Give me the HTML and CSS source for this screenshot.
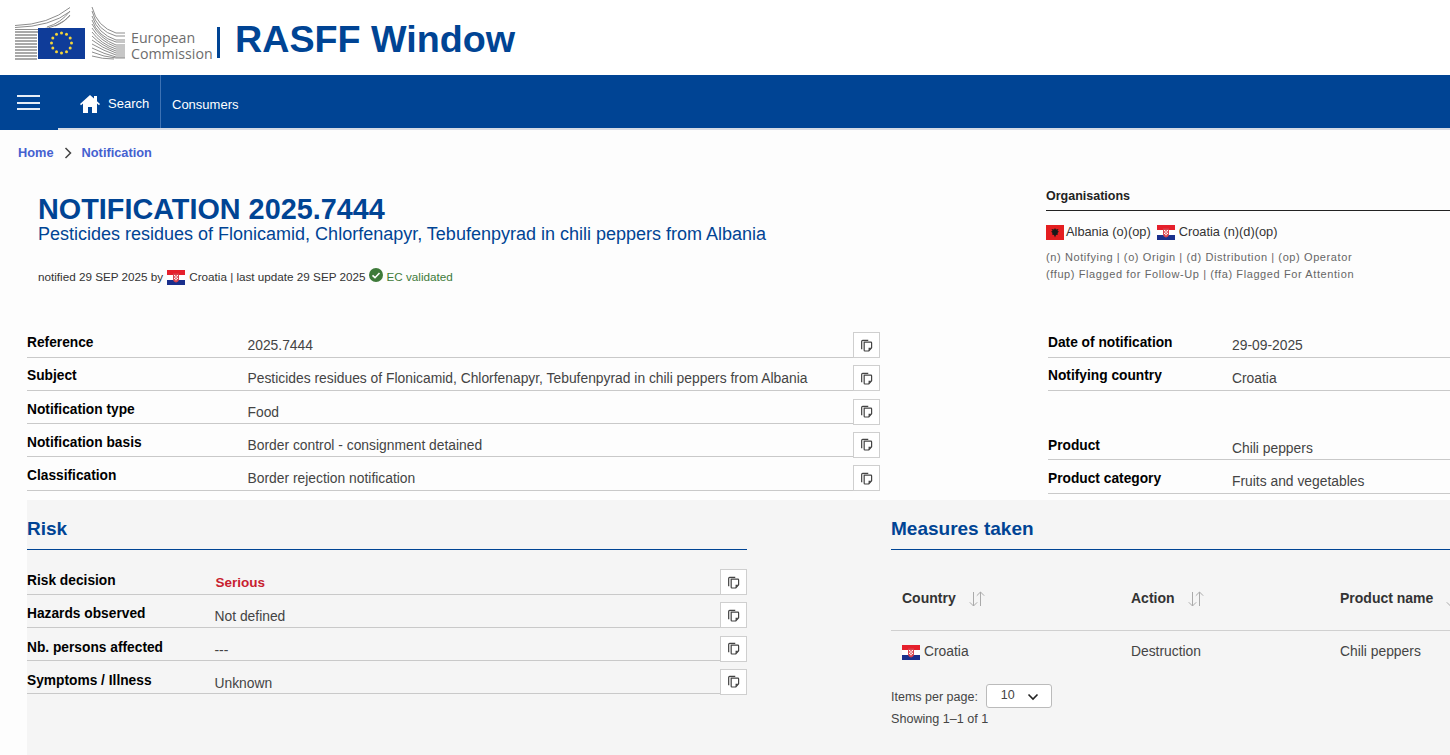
FILE: index.html
```html
<!DOCTYPE html>
<html lang="en">
<head>
<meta charset="utf-8">
<title>RASFF Window</title>
<link rel="stylesheet" href="styles.css">
</head>
<body>
<svg class="defs" width="0" height="0" aria-hidden="true">
  <defs>
    <symbol id="hr" viewBox="0 0 18 15">
      <rect width="18" height="5" fill="#e5202c"/>
      <rect y="5" width="18" height="5" fill="#fff"/>
      <rect y="10" width="18" height="5" fill="#1a2f8c"/>
      <path d="M6 3.500h6v5.500q0 2.500-3 3.500q-3-1-3-3.500z" fill="#d9434e"/>
      <path d="M7 5h1.300v1.300H7zM9.700 5H11v1.300H9.700zM8.300 6.300h1.400v1.400H8.300zM7 7.700h1.300V9H7zM9.700 7.700H11V9H9.700zM8.300 9h1.400v1.300H8.300z" fill="#fff"/>
    </symbol>
    <symbol id="al" viewBox="0 0 18 15">
      <rect width="18" height="15" fill="#e41e20"/>
      <path d="M9 3l1 1.500 2.500-.5-1 2 1.500.5-1.500 1.500.5 1.500-2 .5-1 2.500-1-2.500-2-.5.5-1.500-1.500-1.500 1.500-.5-1-2 2.500.5z" fill="#1a1a1a"/>
    </symbol>
    <symbol id="copy" viewBox="0 0 14 14">
      <path d="M2.500 10.500h-.7V2.600q0-1.100 1.100-1.100h6" fill="none" stroke="#444" stroke-width="1.300"/>
      <path d="M4.500 3.400h7.200q.8 0 .8.800v5.300l-3 3.400H5.300q-.8 0-.8-.8z" fill="none" stroke="#444" stroke-width="1.300"/>
      <path d="M12.500 9.300H9.200v3.600z" fill="#444"/>
    </symbol>
    <symbol id="sort" viewBox="0 0 16 16">
      <path d="M4.500 1v14M.8 11.300l3.700 3.700 3.700-3.700M11.500 15V1M7.800 4.700L11.500 1l3.700 3.700" fill="none" stroke="#aaa" stroke-width="1"/>
    </symbol>
  </defs>
</svg>

<header class="site-header">
  <div class="ec-logo">
    <svg class="ec-mark" width="110" height="54" viewBox="0 0 110 54" aria-hidden="true">
      <g fill="none" stroke="#8d8d8d" stroke-width="1">
        <path d="M0 19.500q34-1 55-18"/><path d="M0 21.500q36-1 55-16"/><path d="M0 23.500h24q20-2 31-14"/>
        <path d="M32 21q14-4 23-16"/><path d="M40 20q10-4 15-11"/>
        <path d="M77 1q5 20 24 26h9"/><path d="M77 5q5 20 24 25h9"/><path d="M77 10q6 18 24 24h9"/><path d="M77 14q6 17 24 22h9"/><path d="M77 18q8 15 24 21h9"/><path d="M77 22q8 13 24 19h9"/><path d="M77 26q9 12 24 17h9"/><path d="M77 30q10 10 24 15h9"/><path d="M77 34q10 8 24 13h9"/><path d="M77 38q12 7 24 11h9"/><path d="M77 42q12 6 24 9h9"/><path d="M77 46q12 5 24 6h9"/><path d="M77 50q10 3 22 3"/>
      </g>
      <g fill="none" stroke="#8d8d8d" stroke-width="1.500">
        <path d="M0 26h24"/><path d="M0 29h22"/><path d="M0 32h22"/><path d="M0 35h22"/><path d="M0 38h22"/><path d="M0 41h22"/><path d="M0 44h22"/><path d="M0 47h22"/><path d="M0 50h22"/><path d="M0 53h22"/>
      </g>
      <rect x="23" y="22" width="47" height="31" fill="#0f3c99"/>
      <g fill="#f4d43a">
        <circle cx="46.500" cy="27" r="1.500"/><circle cx="51.500" cy="28.300" r="1.500"/><circle cx="55.200" cy="32" r="1.500"/><circle cx="56.500" cy="37" r="1.500"/><circle cx="55.200" cy="42" r="1.500"/><circle cx="51.500" cy="45.700" r="1.500"/><circle cx="46.500" cy="47" r="1.500"/><circle cx="41.500" cy="45.700" r="1.500"/><circle cx="37.800" cy="42" r="1.500"/><circle cx="36.500" cy="37" r="1.500"/><circle cx="37.800" cy="32" r="1.500"/><circle cx="41.500" cy="28.300" r="1.500"/>
      </g>
    </svg>
    <div class="ec-name">European<br>Commission</div>
    <span class="ec-sep"></span>
  </div>
  <div class="app-title">RASFF Window</div>
</header>

<nav class="main-nav">
  <div class="burger"><span></span><span></span><span></span></div>
  <a class="nav-item nav-home">
    <svg width="20" height="20" viewBox="0 0 20 20" aria-hidden="true"><path d="M10 1L0 10l1 1.300L3 9.600V19h5v-6h4v6h5V9.600l2 1.700L20 10l-3-2.700V2h-3v2.600z" fill="#fff"/></svg>
    <span>Search</span>
  </a>
  <a class="nav-item nav-plain"><span>Consumers</span></a>
</nav>

<div class="breadcrumb">
  <a>Home</a>
  <svg width="8" height="12" viewBox="0 0 8 12" aria-hidden="true"><path d="M1.500 1l5 5-5 5" fill="none" stroke="#444" stroke-width="1.500"/></svg>
  <a>Notification</a>
</div>

<section class="intro">
  <div class="intro-main">
    <h1>NOTIFICATION 2025.7444</h1>
    <h2>Pesticides residues of Flonicamid, Chlorfenapyr, Tebufenpyrad in chili peppers from Albania</h2>
    <p class="meta">
      <span>notified 29 SEP 2025 by</span>
      <svg class="flag" aria-hidden="true"><use href="#hr"/></svg>
      <span>Croatia | last update 29 SEP 2025</span>
      <svg class="tick" width="14" height="14" viewBox="0 0 14 14" aria-hidden="true"><circle cx="7" cy="7" r="7" fill="#3e7a3a"/><path d="M3.500 7.300l2.500 2.400 4.500-4.700" fill="none" stroke="#fff" stroke-width="1.600"/></svg>
      <span class="validated">EC validated</span>
    </p>
  </div>
  <aside class="orgs">
    <h3>Organisations</h3>
    <div class="org-list">
      <svg class="flag flag-al" aria-hidden="true"><use href="#al"/></svg><span>Albania (o)(op)</span>
      <svg class="flag flag-second" aria-hidden="true"><use href="#hr"/></svg><span>Croatia (n)(d)(op)</span>
    </div>
    <p class="legend">(n) Notifying | (o) Origin | (d) Distribution | (op) Operator<br>(ffup) Flagged for Follow-Up | (ffa) Flagged For Attention</p>
  </aside>
</section>

<section class="facts">
  <div class="facts-left">
    <div class="row"><b>Reference</b><span>2025.7444</span><button class="copy"><svg aria-hidden="true"><use href="#copy"/></svg></button></div>
    <div class="row"><b>Subject</b><span>Pesticides residues of Flonicamid, Chlorfenapyr, Tebufenpyrad in chili peppers from Albania</span><button class="copy"><svg aria-hidden="true"><use href="#copy"/></svg></button></div>
    <div class="row"><b>Notification type</b><span>Food</span><button class="copy"><svg aria-hidden="true"><use href="#copy"/></svg></button></div>
    <div class="row"><b>Notification basis</b><span>Border control - consignment detained</span><button class="copy"><svg aria-hidden="true"><use href="#copy"/></svg></button></div>
    <div class="row"><b>Classification</b><span>Border rejection notification</span><button class="copy"><svg aria-hidden="true"><use href="#copy"/></svg></button></div>
  </div>
  <div class="facts-right">
    <div class="rrow"><b>Date of notification</b><span>29-09-2025</span></div>
    <div class="rrow"><b>Notifying country</b><span>Croatia</span></div>
    <div class="rrow rrow-gap"><b>Product</b><span>Chili peppers</span></div>
    <div class="rrow"><b>Product category</b><span>Fruits and vegetables</span></div>
  </div>
</section>

<section class="band">
  <div class="risk">
    <h4>Risk</h4>
    <div class="risk-rows">
      <div class="row"><b>Risk decision</b><span class="serious">Serious</span><button class="copy"><svg aria-hidden="true"><use href="#copy"/></svg></button></div>
      <div class="row"><b>Hazards observed</b><span>Not defined</span><button class="copy"><svg aria-hidden="true"><use href="#copy"/></svg></button></div>
      <div class="row"><b>Nb. persons affected</b><span>---</span><button class="copy"><svg aria-hidden="true"><use href="#copy"/></svg></button></div>
      <div class="row"><b>Symptoms / Illness</b><span>Unknown</span><button class="copy"><svg aria-hidden="true"><use href="#copy"/></svg></button></div>
    </div>
  </div>
  <div class="measures">
    <h4>Measures taken</h4>
    <div class="table">
      <div class="thead">
        <div class="cell c1"><b>Country</b><svg class="sort" aria-hidden="true"><use href="#sort"/></svg></div>
        <div class="cell c2"><b>Action</b><svg class="sort" aria-hidden="true"><use href="#sort"/></svg></div>
        <div class="cell c3"><b>Product name</b><svg class="sort" aria-hidden="true"><use href="#sort"/></svg></div>
      </div>
      <div class="tbody">
        <div class="cell c1"><svg class="flag" aria-hidden="true"><use href="#hr"/></svg><span>Croatia</span></div>
        <div class="cell c2">Destruction</div>
        <div class="cell c3">Chili peppers</div>
      </div>
    </div>
    <div class="pager">
      <span>Items per page:</span>
      <div class="select"><span>10</span><svg width="12" height="8" viewBox="0 0 12 8" aria-hidden="true"><path d="M1.500 1.500L6 6l4.500-4.500" fill="none" stroke="#222" stroke-width="1.600"/></svg></div>
    </div>
    <div class="showing">Showing 1–1 of 1</div>
  </div>
</section>
</body>
</html>
```

FILE: styles.css
```css
* { box-sizing: border-box; }
html, body { margin: 0; height: 755px; overflow: hidden; }
body { background: #fdfdfd; color: #333; font: 14px/1.2 "Liberation Sans", Arial, sans-serif; width: 1450px; }
.defs { position: absolute; }

.site-header { height: 75px; background: #fff; display: flex; align-items: flex-start; }
.ec-logo { display: flex; align-items: flex-start; margin-left: 15px; padding-top: 6px; }
.ec-mark { display: block; }
.ec-name { margin: 24px 0 0 6px; font: 14.2px/15.5px "Open Sans", sans-serif; color: #6d6d6d; width: 81px; white-space: nowrap; }
.ec-sep { width: 3px; height: 31px; background: #004494; margin: 21px 0 0 5px; }
.app-title { margin: 16px 0 0 15px; font-size: 37.700px; line-height: 46px; font-weight: 700; color: #004494; }

.main-nav { height: 55px; background: #004494; border-bottom: 2px solid #d6dbe4; display: flex; color: #fff; }
.burger { width: 58px; height: 55px; margin-bottom: -2px; background: #004494; display: flex; flex-direction: column; gap: 4.500px; padding: 20px 0 0 17px; position: relative; }
.burger span { display: block; width: 23px; height: 2px; background: #e6edf6; }
.nav-item { display: flex; align-items: center; height: 53px; font-size: 13px; }
.nav-home { width: 103px; padding: 0 0 0 22px; gap: 8px; border-right: 1px solid #3d72b4; }
.nav-home span { margin-top: 5px; }
.nav-home svg { margin-top: 4px; }
.nav-plain { padding: 0 0 0 11px; }
.nav-plain span { margin-top: 6px; }

.breadcrumb { height: 46px; display: flex; align-items: center; padding: 0 0 0 18px; gap: 10px; font-size: 12.800px; font-weight: 700; color: #4561d0; }

.intro { display: flex; height: 127px; }
.intro-main { width: 1046px; padding: 17px 0 0 38px; }
h1 { margin: 0; font-size: 28.800px; line-height: 32px; font-weight: 700; color: #004494; }
h2 { margin: -1px 0 0; font-size: 18px; line-height: 21px; font-weight: 400; color: #004494; }
.meta { margin: 22px 0 0; display: flex; align-items: center; font-size: 11.700px; height: 18px; color: #333; white-space: nowrap; }
.meta .flag { margin: 2px 4px 0; }
.meta span { margin-top: 2px; }
.tick { margin: -3px 4px 0 3px; }
.validated { color: #3e7a3a; }
.flag { width: 18px; height: 15px; display: inline-block; flex: none; }
.orgs { flex: 1; padding-top: 13px; }
h3 { margin: 0; height: 22px; border-bottom: 1px solid #222; font-size: 12.500px; line-height: 15px; font-weight: 700; color: #222; }
.org-list { display: flex; align-items: center; margin-top: 13px; height: 16px; font-size: 12.800px; white-space: nowrap; }
.flag-al { margin-right: 2px; }
.flag-second { margin: 0 4px 0 6px; }
.legend { margin: 9px 0 0; font-size: 11px; line-height: 17px; letter-spacing: .6px; color: #666; white-space: nowrap; }

.facts { display: flex; height: 197px; padding: 29px 0 0 27px; }
.facts-left { width: 853px; }
.row { display: flex; align-items: flex-start; height: 25.500px; border-bottom: 1px solid #c9c9c9; margin-bottom: 7.800px; position: relative; }
.row b { width: 220.500px; font-size: 13.750px; line-height: 16px; padding-top: 3px; color: #000; flex: none; }
.row > span { flex: 1; line-height: 16px; padding-top: 5px; font-size: 13.850px; color: #444; }
.row > .serious { color: #c8202f; font-weight: 700; font-size: 13.500px; padding-left: 1px; }
.copy { width: 27px; height: 26px; background: #fff; border: 1px solid #cfcfcf; padding: 0; display: flex; align-items: center; justify-content: center; flex: none; }
.copy svg { width: 13px; height: 13px; }
.facts-right { margin-left: 168px; flex: 1; }
.rrow { display: flex; height: 25.500px; border-bottom: 1px solid #c9c9c9; margin-bottom: 7.800px; }
.rrow b { width: 184px; font-size: 13.750px; line-height: 16px; padding-top: 3px; color: #000; flex: none; }
.rrow span { line-height: 16px; padding-top: 5px; font-size: 13.850px; color: #444; }
.rrow-gap { margin-top: 44px; }

.band { margin-left: 27px; height: 255px; background: #f5f5f5; display: flex; }
.risk { width: 720px; flex: none; }
h4 { margin: 0; height: 50px; padding-top: 17px; border-bottom: 1px solid #004494; font-size: 19px; line-height: 24px; font-weight: 700; color: #004494; }
.risk-rows { padding-top: 19px; }
.risk-rows .row b { width: 187.500px; padding-top: 4px; }
.risk-rows .row > span { padding-top: 6px; }
.measures { margin-left: 144px; flex: 1; min-width: 0; }
.table { width: 100%; }
.thead { display: flex; height: 81px; border-bottom: 1px solid #d0d0d0; font-size: 14px; }
.thead .cell { padding-top: 40px; display: flex; align-items: flex-start; }
.thead b { color: #333; }
.sort { width: 16px; height: 16px; margin: 1px 0 0 13px; flex: none; }
.tbody { display: flex; height: 45px; color: #444; font-size: 13.850px; }
.tbody .cell { padding-top: 12px; display: flex; align-items: flex-start; }
.tbody .flag { margin: 2px 4px 0 0; }
.c1 { width: 240px; padding-left: 11px; flex: none; }
.c2 { width: 209px; flex: none; }
.c3 { flex: none; white-space: nowrap; }
.pager { display: flex; align-items: center; gap: 8px; margin-top: 8px; font-size: 12.500px; color: #444; }
.pager > span { margin-top: 3px; }
.select { width: 66px; height: 24px; background: #fff; border: 1px solid #bbb; border-radius: 3px; display: flex; align-items: center; justify-content: space-between; padding: 0 12px 2px 14px; font-size: 12.500px; }
.select svg { margin-top: 3px; }
.showing { margin-top: 4px; font-size: 12.600px; line-height: 15px; color: #444; }
```
